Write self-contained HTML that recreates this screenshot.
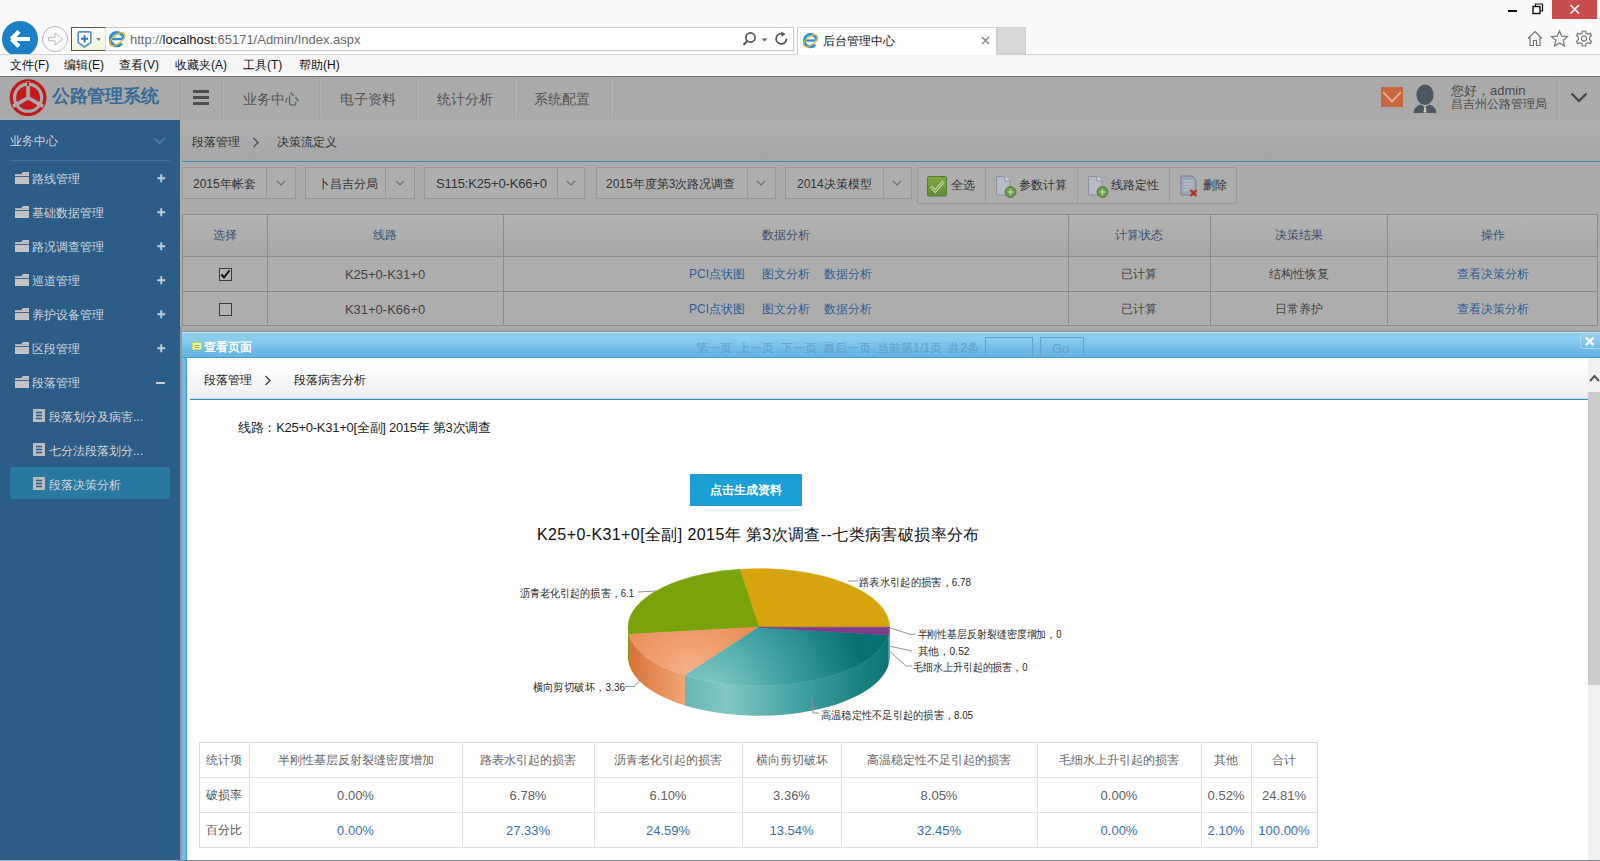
<!DOCTYPE html>
<html><head><meta charset="utf-8">
<style>
*{margin:0;padding:0;box-sizing:border-box}
html,body{width:1600px;height:861px;overflow:hidden;background:#fff}
body{position:relative;font-family:"Liberation Sans",sans-serif;font-size:12px;color:#333}
.a{position:absolute}
.t{position:absolute;white-space:nowrap;line-height:1}
svg{position:absolute;overflow:visible}
/* chrome */
#chrome{left:0;top:0;width:1600px;height:55px;background:#fafafa;border-bottom:1px solid #d2d2d2;box-shadow:inset 0 -2px 0 #fff}
#menubar{left:0;top:55px;width:1600px;height:21px;background:#f6f6f6;border-bottom:1px solid #fff}
#menubar .t{top:59px;font-size:12px;color:#111}
#hdr{left:0;top:76px;width:1600px;height:44px;background:#aaaaaa;border-top:1px solid #6e6e6e}
.vsep{position:absolute;top:77px;height:42px;width:1px;background:#a0a0a0;box-shadow:1px 0 0 #b2b2b2}
.nav{position:absolute;top:92px;font-size:14px;color:#555;white-space:nowrap;line-height:1}
#side{left:0;top:120px;width:180px;height:741px;background:#2b5d86}
#main{left:180px;top:120px;width:1420px;height:212px;background:#ababab}
</style></head><body>
<!-- ============ BROWSER CHROME ============ -->
<div id="chrome" class="a"></div>
<!-- back button -->
<div class="a" style="left:0;top:19px;width:54px;height:35px;overflow:hidden">
 <div class="a" style="left:1.7px;top:1.6px;width:36.6px;height:36.6px;border-radius:50%;background:#1b80c6"></div>
 <svg style="left:0;top:0" width="54" height="36"><path d="M11.5,20 L19,12.5 M11.5,20 L19,27.5 M11,20 L30,20" stroke="#fff" stroke-width="4.2" fill="none" stroke-linecap="butt"/></svg>
</div>
<div class="a" style="left:42px;top:26px;width:26px;height:26px;border-radius:50%;border:1px solid #b9b9b9;background:#fafafa"></div>
<svg style="left:42px;top:26px" width="26" height="26"><path d="M6.5,11.3 H13 V7 L20.5,13 L13,19 V14.7 H6.5 Z" stroke="#bdbdbd" stroke-width="1" fill="none" stroke-linejoin="round"/></svg>
<!-- address bar -->
<div class="a" style="left:71px;top:27px;width:723px;height:24px;border:1px solid #c9c9c9;background:#fff"></div>
<div class="a" style="left:71px;top:27px;width:35px;height:24px;border:1px solid #555;border-right:1px solid #dcdcdc;background:linear-gradient(#fbfdf6,#eef5dc)"></div>
<svg style="left:76px;top:30px" width="30" height="20"><path d="M2.2,2.8 Q2.2,1.8 3.2,1.8 H13.8 Q14.8,1.8 14.8,2.8 V12.5 L8.5,17 L2.2,12.5 Z" fill="#fff" stroke="#5a8fd2" stroke-width="1.7" stroke-linejoin="round"/><path d="M8.5,5.2 V12.4 M5,8.8 H12" stroke="#2f6fd0" stroke-width="1.9"/><path d="M20,8 L25,8 L22.5,11 Z" fill="#888"/></svg>
<svg style="left:108px;top:30px" width="20" height="20"><path d="M15.6,9 A6.6,6.6 0 1 0 13.9,13.5" fill="none" stroke="#2d8ee0" stroke-width="3"/><path d="M3.5,9 H15.5" stroke="#2d8ee0" stroke-width="2.4"/><ellipse cx="9.2" cy="9.3" rx="9" ry="4.3" transform="rotate(-38 9.2 9.3)" fill="none" stroke="#f0b323" stroke-width="1.3"/></svg>
<div class="t" style="left:130px;top:33px;font-size:13px;color:#6a6a6a">http://<span style="color:#111">localhost</span>:65171/Admin/Index.aspx</div>
<svg style="left:741px;top:31px" width="50" height="18"><circle cx="9.5" cy="6.5" r="4.6" fill="none" stroke="#555" stroke-width="1.7"/><path d="M6.3,9.8 L2.5,14" stroke="#555" stroke-width="2"/><path d="M20.5,7.5 L26.5,7.5 L23.5,10.5 Z" fill="#666"/><path d="M45.5,7.5 A5.2,5.2 0 1 1 42.5,3" fill="none" stroke="#555" stroke-width="1.7"/><path d="M40,0.5 L44.5,3 L40.5,6 Z" fill="#555"/></svg>
<!-- tab -->
<div class="a" style="left:797px;top:27px;width:200px;height:28px;border:1px solid #cfcfcf;border-bottom:none;background:#fff"></div>
<svg style="left:802px;top:32px" width="20" height="20"><path d="M14.7,8.5 A6.2,6.2 0 1 0 13.1,12.8" fill="none" stroke="#2d8ee0" stroke-width="2.8"/><path d="M3,8.5 H14.5" stroke="#2d8ee0" stroke-width="2.2"/><ellipse cx="8.5" cy="8.8" rx="8.4" ry="4" transform="rotate(-38 8.5 8.8)" fill="none" stroke="#f0b323" stroke-width="1.2"/></svg>
<div class="t" style="left:823px;top:35px;font-size:12px;color:#111">后台管理中心</div>
<svg style="left:980px;top:35px" width="12" height="12"><path d="M2,2 L9,9 M9,2 L2,9" stroke="#8a8a8a" stroke-width="1.5"/></svg>
<div class="a" style="left:997px;top:27px;width:29px;height:27px;background:#d9d9d9;border:1px solid #cfcfcf"></div>
<!-- window controls -->
<div class="a" style="left:1508px;top:10px;width:9px;height:2px;background:#111"></div>
<svg style="left:1532px;top:3px" width="12" height="12"><rect x="1" y="3.5" width="7" height="7" fill="none" stroke="#111" stroke-width="1.4"/><path d="M3.5,3.5 V1 H10.5 V8 H8" fill="none" stroke="#111" stroke-width="1.2"/></svg>
<div class="a" style="left:1552px;top:0;width:45px;height:19px;background:#c94c4c"></div>
<svg style="left:1568px;top:4px" width="14" height="11"><path d="M2.5,1 L11,9.5 M11,1 L2.5,9.5" stroke="#fff" stroke-width="1.6"/></svg>
<!-- home star gear -->
<svg style="left:1526px;top:30px" width="70" height="18"><path d="M2,8.5 L9,1.5 L16,8.5 M4,7 V15.5 H7.5 V10.5 H10.5 V15.5 H14 V7" fill="none" stroke="#777" stroke-width="1.2"/>
<path d="M33.5,1 L35.8,6.2 L41.5,6.6 L37.2,10.3 L38.5,16 L33.5,13 L28.5,16 L29.8,10.3 L25.5,6.6 L31.2,6.2 Z" fill="none" stroke="#777" stroke-width="1.2"/>
<g transform="translate(58,8.5)" fill="none" stroke="#777" stroke-width="1.2"><path d="M-1.6,-7.5 L1.6,-7.5 L2.1,-5.2 L4.2,-4.1 L6.3,-5.2 L7.5,-2.8 L5.6,-1.2 L5.6,1.2 L7.5,2.8 L6.3,5.2 L4.2,4.1 L2.1,5.2 L1.6,7.5 L-1.6,7.5 L-2.1,5.2 L-4.2,4.1 L-6.3,5.2 L-7.5,2.8 L-5.6,1.2 L-5.6,-1.2 L-7.5,-2.8 L-6.3,-5.2 L-4.2,-4.1 L-2.1,-5.2 Z"/><circle r="2.6"/></g></svg>
<!-- menu bar -->
<div id="menubar" class="a">
</div>
<div class="t" style="left:10px;top:59px;font-size:12px;color:#111">文件(F)</div>
<div class="t" style="left:64px;top:59px;font-size:12px;color:#111">编辑(E)</div>
<div class="t" style="left:119px;top:59px;font-size:12px;color:#111">查看(V)</div>
<div class="t" style="left:175px;top:59px;font-size:12px;color:#111">收藏夹(A)</div>
<div class="t" style="left:243px;top:59px;font-size:12px;color:#111">工具(T)</div>
<div class="t" style="left:299px;top:59px;font-size:12px;color:#111">帮助(H)</div>

<!-- ============ APP HEADER ============ -->
<div id="hdr" class="a"></div>
<svg style="left:9px;top:79px" width="38" height="38"><circle cx="19.1" cy="18.7" r="16.8" fill="none" stroke="#c0181c" stroke-width="3.3"/>
<circle cx="19.1" cy="18.7" r="12" fill="#c41a1d"/>
<path d="M19.1,18.7 V2 M19.1,18.7 L4,27.4 M19.1,18.7 L34.2,27.4" stroke="#aaaaaa" stroke-width="3.6"/>
<path d="M19.1,2.5 V6.8" stroke="#c0181c" stroke-width="2"/></svg>
<div class="t" style="left:52px;top:87px;font-size:18px;font-weight:bold;color:#366a98;letter-spacing:-0.3px">公路管理系统</div>
<div class="vsep" style="left:180px"></div>
<div class="vsep" style="left:222px"></div>
<div class="vsep" style="left:319px"></div>
<div class="vsep" style="left:416px"></div>
<div class="vsep" style="left:514px"></div>
<div class="vsep" style="left:610px"></div>
<div class="a" style="left:193px;top:90px;width:16px;height:3px;background:#4d4d4d"></div>
<div class="a" style="left:193px;top:96px;width:16px;height:3px;background:#4d4d4d"></div>
<div class="a" style="left:193px;top:102px;width:16px;height:3px;background:#4d4d4d"></div>
<div class="nav" style="left:243px">业务中心</div>
<div class="nav" style="left:340px">电子资料</div>
<div class="nav" style="left:437px">统计分析</div>
<div class="nav" style="left:534px">系统配置</div>
<!-- right header -->
<div class="a" style="left:1381px;top:87px;width:22px;height:20px;background:#c9663f"></div>
<svg style="left:1381px;top:87px" width="22" height="20"><path d="M2,5 L11,14.5 L20,5" fill="none" stroke="#e9b79c" stroke-width="1.8"/></svg>
<svg style="left:1411px;top:84px" width="30" height="30"><ellipse cx="14" cy="10.8" rx="8.6" ry="10.2" fill="#50565f"/><path d="M2.5,29 Q3,22.5 9.5,20.5 L14,23 L18.5,20.5 Q25,22.5 25.5,29 Z" fill="#50565f"/><path d="M11.5,20.8 L14,23.5 L16.5,20.8 L16,21.5 L14.8,23 L15.5,28.5 L12.5,28.5 L13.2,23 Z" fill="#c8c8c8"/></svg>
<div class="t" style="left:1451px;top:84px;font-size:13px;color:#4a4a4a">您好，admin</div>
<div class="t" style="left:1451px;top:98px;font-size:12px;color:#4a4a4a">昌吉州公路管理局</div>
<div class="vsep" style="left:1557px"></div>
<svg style="left:1570px;top:92px" width="18" height="12"><path d="M1.5,1.5 L9,9 L16.5,1.5" fill="none" stroke="#444" stroke-width="2.2"/></svg>

<!-- ============ SIDEBAR ============ -->
<div id="side" class="a"></div>
<div class="a" style="left:0;top:119px;width:180px;height:1px;background:#9fb3c6"></div>
<div class="t" style="left:10px;top:135px;font-size:12px;color:#d0d4d8;font-weight:500">业务中心</div>
<svg style="left:153px;top:137px" width="14" height="8"><path d="M1,1 L6.5,6 L12,1" fill="none" stroke="#5b82a6" stroke-width="1.3"/></svg>
<div class="a" style="left:10px;top:160px;width:160px;height:1px;background:#3f7099"></div>
<svg style="left:15px;top:172px" width="15" height="13"><path d="M8,0 H14 V2.3 H6 Z" fill="#c4c4c4"/><rect x="0" y="2.2" width="14" height="1.9" fill="#c4c4c4"/><rect x="0" y="5" width="14" height="7" fill="#c4c4c4"/></svg>
<div class="t" style="left:32px;top:173px;font-size:12px;color:#d0d4d8;font-weight:500">路线管理</div>
<svg style="left:156.5px;top:174px" width="9" height="9"><path d="M4.25,0.3 V8.2 M0.3,4.25 H8.2" stroke="#c3cdd8" stroke-width="1.9"/></svg>
<svg style="left:15px;top:206px" width="15" height="13"><path d="M8,0 H14 V2.3 H6 Z" fill="#c4c4c4"/><rect x="0" y="2.2" width="14" height="1.9" fill="#c4c4c4"/><rect x="0" y="5" width="14" height="7" fill="#c4c4c4"/></svg>
<div class="t" style="left:32px;top:207px;font-size:12px;color:#d0d4d8;font-weight:500">基础数据管理</div>
<svg style="left:156.5px;top:208px" width="9" height="9"><path d="M4.25,0.3 V8.2 M0.3,4.25 H8.2" stroke="#c3cdd8" stroke-width="1.9"/></svg>
<svg style="left:15px;top:240px" width="15" height="13"><path d="M8,0 H14 V2.3 H6 Z" fill="#c4c4c4"/><rect x="0" y="2.2" width="14" height="1.9" fill="#c4c4c4"/><rect x="0" y="5" width="14" height="7" fill="#c4c4c4"/></svg>
<div class="t" style="left:32px;top:241px;font-size:12px;color:#d0d4d8;font-weight:500">路况调查管理</div>
<svg style="left:156.5px;top:242px" width="9" height="9"><path d="M4.25,0.3 V8.2 M0.3,4.25 H8.2" stroke="#c3cdd8" stroke-width="1.9"/></svg>
<svg style="left:15px;top:274px" width="15" height="13"><path d="M8,0 H14 V2.3 H6 Z" fill="#c4c4c4"/><rect x="0" y="2.2" width="14" height="1.9" fill="#c4c4c4"/><rect x="0" y="5" width="14" height="7" fill="#c4c4c4"/></svg>
<div class="t" style="left:32px;top:275px;font-size:12px;color:#d0d4d8;font-weight:500">巡道管理</div>
<svg style="left:156.5px;top:276px" width="9" height="9"><path d="M4.25,0.3 V8.2 M0.3,4.25 H8.2" stroke="#c3cdd8" stroke-width="1.9"/></svg>
<svg style="left:15px;top:308px" width="15" height="13"><path d="M8,0 H14 V2.3 H6 Z" fill="#c4c4c4"/><rect x="0" y="2.2" width="14" height="1.9" fill="#c4c4c4"/><rect x="0" y="5" width="14" height="7" fill="#c4c4c4"/></svg>
<div class="t" style="left:32px;top:309px;font-size:12px;color:#d0d4d8;font-weight:500">养护设备管理</div>
<svg style="left:156.5px;top:310px" width="9" height="9"><path d="M4.25,0.3 V8.2 M0.3,4.25 H8.2" stroke="#c3cdd8" stroke-width="1.9"/></svg>
<svg style="left:15px;top:342px" width="15" height="13"><path d="M8,0 H14 V2.3 H6 Z" fill="#c4c4c4"/><rect x="0" y="2.2" width="14" height="1.9" fill="#c4c4c4"/><rect x="0" y="5" width="14" height="7" fill="#c4c4c4"/></svg>
<div class="t" style="left:32px;top:343px;font-size:12px;color:#d0d4d8;font-weight:500">区段管理</div>
<svg style="left:156.5px;top:344px" width="9" height="9"><path d="M4.25,0.3 V8.2 M0.3,4.25 H8.2" stroke="#c3cdd8" stroke-width="1.9"/></svg>
<svg style="left:15px;top:376px" width="15" height="13"><path d="M8,0 H14 V2.3 H6 Z" fill="#c4c4c4"/><rect x="0" y="2.2" width="14" height="1.9" fill="#c4c4c4"/><rect x="0" y="5" width="14" height="7" fill="#c4c4c4"/></svg>
<div class="t" style="left:32px;top:377px;font-size:12px;color:#d0d4d8;font-weight:500">段落管理</div>
<div class="a" style="left:156px;top:382px;width:9px;height:2px;background:#c3cdd8"></div>
<div class="a" style="left:10px;top:467px;width:160px;height:32px;border-radius:3px;background:#2878a0"></div>
<svg style="left:33px;top:409px" width="13" height="14"><rect x="0" y="0" width="12" height="13" fill="#bcbcbc"/><path d="M3,3.5 H9 M3,6.5 H9 M3,9.5 H9" stroke="#2b5d86" stroke-width="1.4"/></svg>
<div class="t" style="left:49px;top:411px;font-size:12px;color:#d0d4d8;font-weight:500">段落划分及病害...</div>
<svg style="left:33px;top:443px" width="13" height="14"><rect x="0" y="0" width="12" height="13" fill="#bcbcbc"/><path d="M3,3.5 H9 M3,6.5 H9 M3,9.5 H9" stroke="#2b5d86" stroke-width="1.4"/></svg>
<div class="t" style="left:49px;top:445px;font-size:12px;color:#d0d4d8;font-weight:500">七分法段落划分...</div>
<svg style="left:33px;top:477px" width="13" height="14"><rect x="0" y="0" width="12" height="13" fill="#bcbcbc"/><path d="M3,3.5 H9 M3,6.5 H9 M3,9.5 H9" stroke="#2b5d86" stroke-width="1.4"/></svg>
<div class="t" style="left:49px;top:479px;font-size:12px;color:#d0d4d8;font-weight:500">段落决策分析</div>
<div id="main" class="a"></div>
<!-- breadcrumb -->
<div class="a" style="left:180px;top:120px;width:1420px;height:41px;background:linear-gradient(#afafaf,#a5a6a8)"></div>
<div class="a" style="left:182px;top:161px;width:1418px;height:1px;background:#3f8ca0"></div><div class="a" style="left:182px;top:162px;width:1418px;height:1px;background:#a3b2b6"></div>
<div class="t" style="left:192px;top:136px;font-size:12px;color:#333">段落管理</div>
<svg style="left:252px;top:137px" width="8" height="11"><path d="M1.5,1 L6,5.5 L1.5,10" fill="none" stroke="#444" stroke-width="1.2"/></svg>
<div class="t" style="left:277px;top:136px;font-size:12px;color:#333">决策流定义</div>
<div class="a" style="left:182px;top:167px;width:114px;height:32px;border:1px solid #999;background:#aeaeae"></div>
<div class="a" style="left:266px;top:167px;width:1px;height:32px;background:#9a9a9a"></div>
<div class="t" style="left:193px;top:178px;font-size:12px;color:#333">2015年帐套</div>
<svg style="left:276px;top:180px" width="10" height="7"><path d="M1,1 L5,5 L9,1" fill="none" stroke="#707070" stroke-width="1.2"/></svg>
<div class="a" style="left:305px;top:167px;width:110px;height:32px;border:1px solid #999;background:#aeaeae"></div>
<div class="a" style="left:385px;top:167px;width:1px;height:32px;background:#9a9a9a"></div>
<div class="t" style="left:318px;top:178px;font-size:12px;color:#333">卜昌吉分局</div>
<svg style="left:395px;top:180px" width="10" height="7"><path d="M1,1 L5,5 L9,1" fill="none" stroke="#707070" stroke-width="1.2"/></svg>
<div class="a" style="left:424px;top:167px;width:161px;height:32px;border:1px solid #999;background:#aeaeae"></div>
<div class="a" style="left:557px;top:167px;width:1px;height:32px;background:#9a9a9a"></div>
<div class="t" style="left:436px;top:177px;font-size:13px;color:#333;letter-spacing:-0.15px">S115:K25+0-K66+0</div>
<svg style="left:566px;top:180px" width="10" height="7"><path d="M1,1 L5,5 L9,1" fill="none" stroke="#707070" stroke-width="1.2"/></svg>
<div class="a" style="left:596px;top:167px;width:180px;height:32px;border:1px solid #999;background:#aeaeae"></div>
<div class="a" style="left:747px;top:167px;width:1px;height:32px;background:#9a9a9a"></div>
<div class="t" style="left:606px;top:178px;font-size:12px;color:#333">2015年度第3次路况调查</div>
<svg style="left:756px;top:180px" width="10" height="7"><path d="M1,1 L5,5 L9,1" fill="none" stroke="#707070" stroke-width="1.2"/></svg>
<div class="a" style="left:785px;top:167px;width:127px;height:32px;border:1px solid #999;background:#aeaeae"></div>
<div class="a" style="left:883px;top:167px;width:1px;height:32px;background:#9a9a9a"></div>
<div class="t" style="left:797px;top:178px;font-size:12px;color:#333">2014决策模型</div>
<svg style="left:892px;top:180px" width="10" height="7"><path d="M1,1 L5,5 L9,1" fill="none" stroke="#707070" stroke-width="1.2"/></svg>
<div class="a" style="left:917px;top:167px;width:320px;height:37px;border:1px solid #999;background:#adadad;border-radius:2px"></div>
<div class="a" style="left:985px;top:168px;width:1px;height:35px;background:#9c9c9c"></div>
<div class="a" style="left:1077px;top:168px;width:1px;height:35px;background:#9c9c9c"></div>
<div class="a" style="left:1169px;top:168px;width:1px;height:35px;background:#9c9c9c"></div>
<svg style="left:927px;top:176px" width="21" height="22"><defs><linearGradient id="gck" x1="0" y1="0" x2="0" y2="1"><stop offset="0" stop-color="#80a848"/><stop offset="1" stop-color="#618c34"/></linearGradient></defs><rect x="0.5" y="0.5" width="19" height="19.5" rx="1.2" fill="url(#gck)" stroke="#557a30"/><path d="M4,10.5 L8.3,15 L16.5,5.5" fill="none" stroke="#d8e6c8" stroke-width="3"/><path d="M4,10.5 L8.3,15 L16.5,5.5" fill="none" stroke="#7aa544" stroke-width="1.2"/></svg>
<div class="t" style="left:951px;top:179px;font-size:12px;color:#333">全选</div>
<svg style="left:995px;top:175px" width="24" height="24"><path d="M1.5,1.5 H10 L15,6.5 V20 H1.5 Z" fill="#b9bcc6" stroke="#8c92a0" stroke-width="1" stroke-linejoin="round"/><path d="M10,1 V6 H15" fill="#d6d8dc" stroke="#8a8f9a" stroke-width="1"/><circle cx="15.5" cy="17" r="5.5" fill="#6d9848" stroke="#55803a" stroke-width="1"/><path d="M15.5,14 V20 M12.5,17 H18.5" stroke="#b9d6a2" stroke-width="1.5"/></svg>
<div class="t" style="left:1019px;top:179px;font-size:12px;color:#333">参数计算</div>
<svg style="left:1087px;top:175px" width="24" height="24"><path d="M1.5,1.5 H10 L15,6.5 V20 H1.5 Z" fill="#b9bcc6" stroke="#8c92a0" stroke-width="1" stroke-linejoin="round"/><path d="M10,1 V6 H15" fill="#d6d8dc" stroke="#8a8f9a" stroke-width="1"/><circle cx="15.5" cy="17" r="5.5" fill="#6d9848" stroke="#55803a" stroke-width="1"/><path d="M15.5,14 V20 M12.5,17 H18.5" stroke="#b9d6a2" stroke-width="1.5"/></svg>
<div class="t" style="left:1111px;top:179px;font-size:12px;color:#333">线路定性</div>
<svg style="left:1180px;top:175px" width="24" height="24"><path d="M1,1 H12 L16,5 V20 H1 Z" fill="#9ea6b4" stroke="#7a808c" stroke-width="1"/><path d="M3.5,6 H13 M3.5,9 H13 M3.5,12 H13 M3.5,15 H10" stroke="#c6cad2" stroke-width="1"/><path d="M10.5,15 L16.5,21 M16.5,15 L10.5,21" stroke="#b8322a" stroke-width="2.2"/></svg>
<div class="t" style="left:1203px;top:179px;font-size:12px;color:#333">删除</div>
<div class="a" style="left:182px;top:214px;width:1416px;height:112px;border:1px solid #8c8c8c;background:#adadad"></div>
<div class="a" style="left:183px;top:215px;width:1414px;height:41px;background:linear-gradient(#b4b4b4,#a7a7a7)"></div>
<div class="a" style="left:182px;top:256px;width:1416px;height:1px;background:#8c8c8c"></div>
<div class="a" style="left:182px;top:291px;width:1416px;height:1px;background:#8c8c8c"></div>
<div class="a" style="left:267px;top:214px;width:1px;height:112px;background:#8c8c8c"></div>
<div class="a" style="left:503px;top:214px;width:1px;height:112px;background:#8c8c8c"></div>
<div class="a" style="left:1068px;top:214px;width:1px;height:112px;background:#8c8c8c"></div>
<div class="a" style="left:1210px;top:214px;width:1px;height:112px;background:#8c8c8c"></div>
<div class="a" style="left:1387px;top:214px;width:1px;height:112px;background:#8c8c8c"></div>
<div class="t" style="left:182px;width:85px;text-align:center;top:229px;font-size:12px;color:#3b526e">选择</div>
<div class="t" style="left:267px;width:236px;text-align:center;top:229px;font-size:12px;color:#3b526e">线路</div>
<div class="t" style="left:503px;width:565px;text-align:center;top:229px;font-size:12px;color:#3b526e">数据分析</div>
<div class="t" style="left:1068px;width:142px;text-align:center;top:229px;font-size:12px;color:#3b526e">计算状态</div>
<div class="t" style="left:1210px;width:177px;text-align:center;top:229px;font-size:12px;color:#3b526e">决策结果</div>
<div class="t" style="left:1387px;width:211px;text-align:center;top:229px;font-size:12px;color:#3b526e">操作</div>
<div class="a" style="left:219px;top:268px;width:13px;height:13px;border:1px solid #3c3c3c;background:#b2b2b2"></div>
<svg style="left:219px;top:268px" width="13" height="13"><path d="M2.5,6.5 L5,9.5 L10.5,2.5" fill="none" stroke="#111" stroke-width="2"/></svg>
<div class="t" style="left:267px;width:236px;text-align:center;top:268px;font-size:13px;color:#444">K25+0-K31+0</div>
<div class="t" style="left:689px;top:268px;font-size:12px;color:#2f5f96">PCI点状图</div>
<div class="t" style="left:762px;top:268px;font-size:12px;color:#2f5f96">图文分析</div>
<div class="t" style="left:824px;top:268px;font-size:12px;color:#2f5f96">数据分析</div>
<div class="t" style="left:1068px;width:142px;text-align:center;top:268px;font-size:12px;color:#444">已计算</div>
<div class="t" style="left:1210px;width:177px;text-align:center;top:268px;font-size:12px;color:#444">结构性恢复</div>
<div class="t" style="left:1387px;width:211px;text-align:center;top:268px;font-size:12px;color:#2f5f96">查看决策分析</div>
<div class="a" style="left:219px;top:303px;width:13px;height:13px;border:1px solid #3c3c3c;background:#b2b2b2"></div>
<div class="t" style="left:267px;width:236px;text-align:center;top:303px;font-size:13px;color:#444">K31+0-K66+0</div>
<div class="t" style="left:689px;top:303px;font-size:12px;color:#2f5f96">PCI点状图</div>
<div class="t" style="left:762px;top:303px;font-size:12px;color:#2f5f96">图文分析</div>
<div class="t" style="left:824px;top:303px;font-size:12px;color:#2f5f96">数据分析</div>
<div class="t" style="left:1068px;width:142px;text-align:center;top:303px;font-size:12px;color:#444">已计算</div>
<div class="t" style="left:1210px;width:177px;text-align:center;top:303px;font-size:12px;color:#444">日常养护</div>
<div class="t" style="left:1387px;width:211px;text-align:center;top:303px;font-size:12px;color:#2f5f96">查看决策分析</div>
<!-- ============ MODAL ============ -->
<div class="a" style="left:182px;top:330px;width:1418px;height:2px;background:linear-gradient(#a2a6aa,#8f959b)"></div>
<div class="a" style="left:180px;top:326px;width:2px;height:535px;background:#8c9ba6"></div>
<div class="a" style="left:182px;top:332px;width:1418px;height:529px;background:#70bae7"></div>
<div class="a" style="left:182px;top:332px;width:1418px;height:25px;background:linear-gradient(#8fcdee,#8acbed 30%,#6fbae6 70%,#63b3e3);border-top:1px solid #c2e6f8"></div>
<div class="t" style="left:696px;top:342px;font-size:12px;color:#5f9fc8;word-spacing:3px">第一页 上一页 下一页 最后一页 当前第1/1页 共2条</div>
<div class="a" style="left:985px;top:337px;width:48px;height:24px;border:1px solid #6aa2c8"></div>
<div class="a" style="left:1040px;top:337px;width:44px;height:24px;border:1px solid #6aa2c8"></div>
<div class="t" style="left:1052px;top:342px;font-size:13px;color:#6aa2c8">Go</div>
<div class="a" style="left:182px;top:357px;width:1418px;height:1px;background:#4b98cf"></div>
<svg style="left:192px;top:342px" width="10" height="8"><rect x="0.5" y="0.5" width="9" height="7" fill="#e8f4a0" stroke="#c8d860"/><path d="M2.5,3.5 H7.5 M2.5,5.5 H7.5" stroke="#7aa040" stroke-width="0.8"/></svg>
<div class="t" style="left:204px;top:341px;font-size:12px;font-weight:bold;color:#fff">查看页面</div>
<div class="a" style="left:1580px;top:334px;width:22px;height:15px;border:1px solid #a9d6f0;border-radius:2px"></div>
<svg style="left:1584px;top:336px" width="12" height="11"><path d="M2,1.5 L9.5,9 M9.5,1.5 L2,9" stroke="#fff" stroke-width="2.4"/></svg>
<div class="a" style="left:186px;top:358px;width:1414px;height:502px;background:#fff;border-left:1px solid #4b98cf"></div>
<div class="a" style="left:0;top:860px;width:180px;height:1px;background:#9aabbc"></div><div class="a" style="left:180px;top:860px;width:1420px;height:1px;background:#7e868e"></div>
<!-- inner breadcrumb -->
<div class="a" style="left:190px;top:364px;width:1398px;height:36px;background:linear-gradient(#ffffff,#eeeff2);border-bottom:1px solid #3b8ea8;box-shadow:inset 0 -1px 0 #b6eaf8"></div>
<div class="t" style="left:204px;top:374px;font-size:12px;color:#222">段落管理</div>
<svg style="left:264px;top:375px" width="8" height="11"><path d="M1.5,1 L6,5.5 L1.5,10" fill="none" stroke="#333" stroke-width="1.2"/></svg>
<div class="t" style="left:294px;top:374px;font-size:12px;color:#222">段落病害分析</div>
<!-- scrollbar -->
<div class="a" style="left:1588px;top:358px;width:12px;height:502px;background:#f0f0f0"></div>
<svg style="left:1589px;top:374px" width="11" height="8"><path d="M1,7 L5.5,2 L10,7" fill="none" stroke="#555" stroke-width="2"/></svg>
<div class="a" style="left:1588px;top:392px;width:12px;height:293px;background:#cdcdcd"></div>
<!-- content -->
<div class="t" style="left:238px;top:421px;font-size:13px;color:#222;letter-spacing:-0.27px">线路：K25+0-K31+0[全副] 2015年 第3次调查</div>
<div class="a" style="left:690px;top:474px;width:112px;height:32px;background:#1c9fd4"></div>
<div class="t" style="left:690px;width:112px;text-align:center;top:484px;font-size:12px;color:#fff;font-weight:bold">点击生成资料</div>
<div class="t" style="left:537px;top:527px;font-size:16px;color:#111;letter-spacing:0.4px">K25+0-K31+0[全副] 2015年 第3次调查--七类病害破损率分布</div>
<!--PIE--><svg style="left:0;top:0" width="1600" height="861"><defs>
<radialGradient id="gTeT" gradientUnits="userSpaceOnUse" cx="705" cy="700" r="190"><stop offset="0" stop-color="#8ed0cf"/><stop offset="0.45" stop-color="#3d9f9f"/><stop offset="0.85" stop-color="#07716f"/><stop offset="1" stop-color="#067371"/></radialGradient>
<linearGradient id="gTeW" gradientUnits="userSpaceOnUse" x1="685" y1="0" x2="890" y2="0"><stop offset="0" stop-color="#67b6b6"/><stop offset="0.2" stop-color="#84c7c7"/><stop offset="0.6" stop-color="#3a9c9c"/><stop offset="1" stop-color="#0a7373"/></linearGradient>
<radialGradient id="gOrT" gradientUnits="userSpaceOnUse" cx="690" cy="672" r="85"><stop offset="0" stop-color="#f6b088"/><stop offset="1" stop-color="#e8874f"/></radialGradient>
<linearGradient id="gOrW" gradientUnits="userSpaceOnUse" x1="629" y1="0" x2="686" y2="0"><stop offset="0" stop-color="#d77236"/><stop offset="0.5" stop-color="#e68c58"/><stop offset="1" stop-color="#f1a777"/></linearGradient>
</defs><path d="M628.00,627.20 A130.8,58.5 0 0 0 628.95,634.22 L628.95,664.22 A130.8,58.5 0 0 1 628.00,657.20 Z" fill="#6e9410"/><path d="M628.95,634.22 A130.8,58.5 0 0 0 684.99,675.50 L684.99,705.50 A130.8,58.5 0 0 1 628.95,664.22 Z" fill="url(#gOrW)"/><path d="M684.99,675.50 A130.8,58.5 0 0 0 888.47,634.88 L888.47,664.88 A130.8,58.5 0 0 1 684.99,705.50 Z" fill="url(#gTeW)"/><path d="M888.47,634.88 A130.8,58.5 0 0 0 889.60,627.20 L889.60,657.20 A130.8,58.5 0 0 1 888.47,664.88 Z" fill="#0c7070"/><path d="M758.8,627.2 L889.60,627.20 A130.8,58.5 0 0 0 739.74,569.32 Z" fill="#d6a40c" stroke="#d6a40c" stroke-width="0.6" stroke-linejoin="round"/><path d="M758.8,627.2 L739.74,569.32 A130.8,58.5 0 0 0 628.95,634.22 Z" fill="#7aa30c" stroke="#7aa30c" stroke-width="0.6" stroke-linejoin="round"/><path d="M758.8,627.2 L628.95,634.22 A130.8,58.5 0 0 0 684.99,675.50 Z" fill="url(#gOrT)" stroke="url(#gOrT)" stroke-width="0.6" stroke-linejoin="round"/><path d="M758.8,627.2 L684.99,675.50 A130.8,58.5 0 0 0 888.47,634.88 Z" fill="url(#gTeT)" stroke="url(#gTeT)" stroke-width="0.6" stroke-linejoin="round"/><path d="M758.8,627.2 L888.47,634.88 A130.8,58.5 0 0 0 889.60,627.20 Z" fill="#7d3b8c" stroke="#7d3b8c" stroke-width="0.6" stroke-linejoin="round"/><path d="M638,592 L656,591" fill="none" stroke="#8f8f9a" stroke-width="1"/><path d="M848,581 L858,581" fill="none" stroke="#8f8f9a" stroke-width="1"/><path d="M889,627.5 L910,634.3 L915,634.3" fill="none" stroke="#8f8f9a" stroke-width="1"/><path d="M889,646 L912,651" fill="none" stroke="#8f8f9a" stroke-width="1"/><path d="M889,650.5 L906,666 L912,666" fill="none" stroke="#8f8f9a" stroke-width="1"/><path d="M625,686.5 L634,686.5 L648,673" fill="none" stroke="#8f8f9a" stroke-width="1"/><path d="M812,697 L813,713 L819,713" fill="none" stroke="#8f8f9a" stroke-width="1"/><text x="520" y="597" textLength="114" lengthAdjust="spacingAndGlyphs" font-size="10.5" font-weight="300" fill="#2a2a2a">沥青老化引起的损害，6.1</text><text x="859" y="586" textLength="112" lengthAdjust="spacingAndGlyphs" font-size="10.5" font-weight="300" fill="#2a2a2a">路表水引起的损害，6.78</text><text x="917.5" y="638" textLength="144" lengthAdjust="spacingAndGlyphs" font-size="10.5" font-weight="300" fill="#2a2a2a">半刚性基层反射裂缝密度增加，0</text><text x="917.5" y="654.5" textLength="52" lengthAdjust="spacingAndGlyphs" font-size="10.5" font-weight="300" fill="#2a2a2a">其他，0.52</text><text x="913" y="670.5" textLength="114.5" lengthAdjust="spacingAndGlyphs" font-size="10.5" font-weight="300" fill="#2a2a2a">毛细水上升引起的损害，0</text><text x="532.5" y="691" textLength="92.5" lengthAdjust="spacingAndGlyphs" font-size="10.5" font-weight="300" fill="#2a2a2a">横向剪切破坏，3.36</text><text x="821" y="718.5" textLength="152" lengthAdjust="spacingAndGlyphs" font-size="10.5" font-weight="300" fill="#2a2a2a">高温稳定性不足引起的损害，8.05</text></svg><!--/PIE-->
<!--TABLE2--><div class="a" style="left:199px;top:742px;width:1119px;height:106px;border:1px solid #dcdcdc"></div>
<div class="a" style="left:199px;top:777px;width:1119px;height:1px;background:#e2e2e2"></div>
<div class="a" style="left:199px;top:812px;width:1119px;height:1px;background:#e2e2e2"></div>
<div class="a" style="left:249px;top:742px;width:1px;height:106px;background:#e2e2e2"></div>
<div class="a" style="left:462px;top:742px;width:1px;height:106px;background:#e2e2e2"></div>
<div class="a" style="left:594px;top:742px;width:1px;height:106px;background:#e2e2e2"></div>
<div class="a" style="left:742px;top:742px;width:1px;height:106px;background:#e2e2e2"></div>
<div class="a" style="left:841px;top:742px;width:1px;height:106px;background:#e2e2e2"></div>
<div class="a" style="left:1037px;top:742px;width:1px;height:106px;background:#e2e2e2"></div>
<div class="a" style="left:1201px;top:742px;width:1px;height:106px;background:#e2e2e2"></div>
<div class="a" style="left:1251px;top:742px;width:1px;height:106px;background:#e2e2e2"></div>
<div class="t" style="left:199px;width:50px;text-align:center;top:754px;font-size:12px;color:#666">统计项</div>
<div class="t" style="left:249px;width:213px;text-align:center;top:754px;font-size:12px;color:#666">半刚性基层反射裂缝密度增加</div>
<div class="t" style="left:462px;width:132px;text-align:center;top:754px;font-size:12px;color:#666">路表水引起的损害</div>
<div class="t" style="left:594px;width:148px;text-align:center;top:754px;font-size:12px;color:#666">沥青老化引起的损害</div>
<div class="t" style="left:742px;width:99px;text-align:center;top:754px;font-size:12px;color:#666">横向剪切破坏</div>
<div class="t" style="left:841px;width:196px;text-align:center;top:754px;font-size:12px;color:#666">高温稳定性不足引起的损害</div>
<div class="t" style="left:1037px;width:164px;text-align:center;top:754px;font-size:12px;color:#666">毛细水上升引起的损害</div>
<div class="t" style="left:1201px;width:50px;text-align:center;top:754px;font-size:12px;color:#666">其他</div>
<div class="t" style="left:1251px;width:66px;text-align:center;top:754px;font-size:12px;color:#666">合计</div>
<div class="t" style="left:199px;width:50px;text-align:center;top:789px;font-size:12px;color:#555">破损率</div>
<div class="t" style="left:249px;width:213px;text-align:center;top:789px;font-size:13px;color:#606060">0.00%</div>
<div class="t" style="left:462px;width:132px;text-align:center;top:789px;font-size:13px;color:#606060">6.78%</div>
<div class="t" style="left:594px;width:148px;text-align:center;top:789px;font-size:13px;color:#606060">6.10%</div>
<div class="t" style="left:742px;width:99px;text-align:center;top:789px;font-size:13px;color:#606060">3.36%</div>
<div class="t" style="left:841px;width:196px;text-align:center;top:789px;font-size:13px;color:#606060">8.05%</div>
<div class="t" style="left:1037px;width:164px;text-align:center;top:789px;font-size:13px;color:#606060">0.00%</div>
<div class="t" style="left:1201px;width:50px;text-align:center;top:789px;font-size:13px;color:#606060">0.52%</div>
<div class="t" style="left:1251px;width:66px;text-align:center;top:789px;font-size:13px;color:#606060">24.81%</div>
<div class="t" style="left:199px;width:50px;text-align:center;top:824px;font-size:12px;color:#555">百分比</div>
<div class="t" style="left:249px;width:213px;text-align:center;top:824px;font-size:13px;color:#3b6fae">0.00%</div>
<div class="t" style="left:462px;width:132px;text-align:center;top:824px;font-size:13px;color:#3b6fae">27.33%</div>
<div class="t" style="left:594px;width:148px;text-align:center;top:824px;font-size:13px;color:#3b6fae">24.59%</div>
<div class="t" style="left:742px;width:99px;text-align:center;top:824px;font-size:13px;color:#3b6fae">13.54%</div>
<div class="t" style="left:841px;width:196px;text-align:center;top:824px;font-size:13px;color:#3b6fae">32.45%</div>
<div class="t" style="left:1037px;width:164px;text-align:center;top:824px;font-size:13px;color:#3b6fae">0.00%</div>
<div class="t" style="left:1201px;width:50px;text-align:center;top:824px;font-size:13px;color:#3b6fae">2.10%</div>
<div class="t" style="left:1251px;width:66px;text-align:center;top:824px;font-size:13px;color:#3b6fae">100.00%</div>
<!--/TABLE2-->
</body></html>
